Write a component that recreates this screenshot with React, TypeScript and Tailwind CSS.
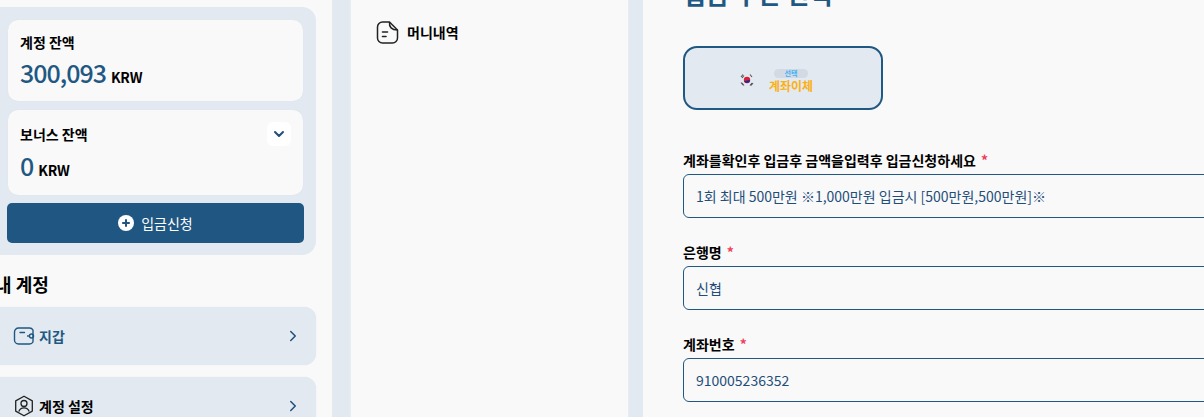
import React from "react";
import { ChevronDown, ChevronRight } from "lucide-react";

function Balance({ label, value, extra }: { label: string; value: string; extra?: boolean }) {
  return (
    <div className={`relative bg-[#f9f9f9] rounded-[10px] pl-[12px] ${extra ? "h-[85px] pt-[14px]" : "h-[81px] pt-[12px]"} shadow-[0_0_1px_#d5dce6]`}>
      <div className="text-[14px] leading-[20px] font-semibold text-black">{label}</div>
      <div className={`flex items-baseline gap-[5px] leading-[32px] ${extra ? "mt-[5px]" : "mt-[4px]"}`}>
        <span className="text-[25px] font-medium tracking-[-1px] text-[#1f5882]">{value}</span>
        <span className="text-[14px] font-semibold tracking-[-0.2px] text-black">KRW</span>
      </div>
      {extra && (
        <span className="absolute right-[12px] top-[12px] w-[24px] h-[24px] rounded-[6px] bg-white flex items-center justify-center">
          <ChevronDown size={16} strokeWidth={3} className="text-[#1f4e79]" />
        </span>
      )}
    </div>
  );
}

function Field({ label, value, mt }: { label: string; value: string; mt: string }) {
  return (
    <div className={mt}>
      <div className="text-[14px] leading-[20px] font-semibold text-black">
        {label} <span className="text-[#f0405a] ml-[2px]">*</span>
      </div>
      <div className="mt-[4px] h-[44px] w-[700px] border border-[#1f5882] rounded-[6px] flex items-center pl-[12px] text-[14px] text-[#1f4e79]">
        {value}
      </div>
    </div>
  );
}

export default function App() {
  return (
    <div className="w-[1204px] h-[417px] overflow-hidden bg-[#f9f9f9] flex font-['Noto_Sans_CJK_KR','Noto_Sans',sans-serif]">
      <aside className="w-[352px] shrink-0 ml-[-20px] pt-[7px]">
        <div className="w-[336px] bg-[#e2e9f1] rounded-[14px] pl-[28px] pr-[13px] pt-[13px] pb-[12px]">
          <Balance label="계정 잔액" value="300,093" />
          <div className="h-[9px]" />
          <Balance label="보너스 잔액" value="0" extra />
          <div className="h-[8px]" />
          <button className="w-[297px] ml-[-1px] h-[40px] rounded-[5px] bg-[#1f5782] text-white text-[14px] flex items-center justify-center gap-[7px]">
            <svg width="16" height="16" viewBox="0 0 16 16">
              <circle cx="8" cy="8" r="8" fill="#fff" />
              <path d="M8 4.200v7.600M4.200 8h7.600" stroke="#1f5782" strokeWidth="2" />
            </svg>
            입금신청
          </button>
        </div>
        <h2 className="ml-[15px] mt-[17px] text-[18px] leading-[24px] font-bold text-black">내 계정</h2>
        <div className="w-[336px] mt-[11px] h-[58px] bg-[#e2e9f1] rounded-[12px] flex items-center pl-[33px] pr-[14px] shadow-[0_0_1px_#d5dce6]">
          <svg width="22" height="20" viewBox="0 0 22 20" fill="none" stroke="#1f5882" strokeWidth="1.400">
            <path d="M16.500 2H5.500A4 4 0 0 0 1.500 6v8a4 4 0 0 0 4 4h11a4 4 0 0 0 3.500-2V4a4 4 0 0 0-3.500-2Z" />
            <path d="M7 6.500h4.500" strokeLinecap="round" />
            <path d="M14 10h3" />
            <circle cx="18.500" cy="10" r="2" />
          </svg>
          <span className="ml-[4px] text-[14px] font-semibold text-[#1f5882]">지갑</span>
          <ChevronRight size={18} strokeWidth={2} className="ml-auto text-[#1f4e79]" />
        </div>
        <div className="w-[336px] mt-[12px] h-[58px] bg-[#e2e9f1] rounded-[12px] flex items-center pl-[33px] pr-[14px] shadow-[0_0_1px_#d5dce6]">
          <svg width="22" height="22" viewBox="0 0 22 22" fill="none" stroke="#222" strokeWidth="1.300">
            <path d="M11 1.200l8.300 4.700v10.200L11 20.800l-8.300-4.700V5.900Z" strokeLinejoin="round" />
            <circle cx="11" cy="8.500" r="3" />
            <path d="M5.800 16.500c1-2.600 3-3.700 5.200-3.700s4.200 1.100 5.200 3.700" />
          </svg>
          <span className="ml-[4px] text-[14px] font-semibold text-black">계정 설정</span>
          <ChevronRight size={18} strokeWidth={2} className="ml-auto text-[#1f4e79]" />
        </div>
      </aside>

      <div className="w-[18px] shrink-0 bg-[#e2e9f1]" />
      <nav className="w-[279px] shrink-0 bg-[#f9f9f9] border-x border-[#e9ecf0] pl-[25px] pt-[21px]">
        <div className="flex items-center gap-[8px] h-[22px]">
          <svg width="23" height="23" viewBox="0 0 23 23" fill="none" stroke="#222" strokeWidth="1.500" strokeLinejoin="round">
            <path d="M13.500 1H6.500A5 5 0 0 0 1.500 6v11a5 5 0 0 0 5 5h10a5 5 0 0 0 5-5V9Z" />
            <path d="M13.500 1c-.5 5 2 8 8 8" />
            <path d="M6.500 11h5M6.500 15.500h3.500" strokeLinecap="round" strokeWidth="1.600" />
          </svg>
          <span className="text-[14px] font-semibold text-black">머니내역</span>
        </div>
      </nav>
      <div className="w-[14px] shrink-0 bg-[#e2e9f1]" />

      <main className="flex-1 pl-[40px] min-w-0 overflow-hidden">
        <h1 className="mt-[-25px] text-[25px] leading-[36px] font-semibold text-[#1f5882]">입금 수단 선택</h1>
        <div className="mt-[35px] w-[200px] h-[64px] border-2 border-[#1f5882] rounded-[14px] bg-[#e2e9f1] flex items-center">
          <svg className="ml-[55px] mt-[4px]" width="14" height="14" viewBox="0 0 14 14">
            <circle cx="7" cy="7" r="3.200" fill="#d81e3a" />
            <path d="M3.900 7.500a3.200 3.200 0 0 0 6.200 0c-1-1-2-.5-3 0s-2 .9-3.200 0Z" fill="#1a2d8c" />
            <path d="M1 4l2-2.500M2 5l2-2.500M10 1.500l2 2.500M10 12.500l2-2.500M2 10l2 2.500M1 9.500l2 2.500M11 12.500l2-2.500" stroke="#555" strokeWidth="1.100" />
          </svg>
          <div className="ml-[15px] mt-[4px] flex flex-col items-center w-[44px]">
            <span className="w-[34px] h-[9px] rounded-full bg-[#d3dae3] text-[7px] leading-[9px] text-center text-[#45b1f5] font-semibold overflow-hidden">선택</span>
            <span className="mt-[1px] text-[12px] leading-[13px] font-bold text-[#fbb116] whitespace-nowrap">계좌이체</span>
          </div>
        </div>
        <Field mt="mt-[40px]" label="계좌를확인후 입금후 금액을입력후 입금신청하세요" value="1회 최대 500만원 ※1,000만원 입금시 [500만원,500만원]※" />
        <Field mt="mt-[24px]" label="은행명" value="신협" />
        <Field mt="mt-[24px]" label="계좌번호" value="910005236352" />
      </main>
    </div>
  );
}
